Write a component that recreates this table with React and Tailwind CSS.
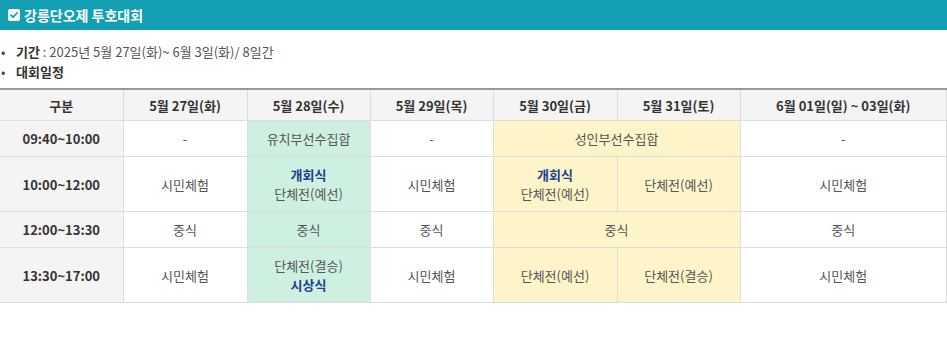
import React from 'react';

const font = { fontFamily: '"Noto Sans CJK KR", "Noto Sans", sans-serif' };

const GREEN = 'bg-[#cdf0e1]';
const YELLOW = 'bg-[#fdf5c9]';

const Blue = ({ children }) => <span className="block font-bold text-[#1d3f8f]">{children}</span>;

const Td = ({ children, className = '', ...rest }) => (
  <td className={`border border-[#dddddd] px-1 py-2 text-center align-middle leading-[19px] ${className}`} {...rest}>
    {children}
  </td>
);

const Th = ({ children }) => (
  <td className="border border-[#dddddd] border-l-0 bg-[#f4f4f4] px-1 py-2 text-center align-middle font-bold leading-[19px] text-[#333]">
    {children}
  </td>
);

const heads = ['구분', '5월 27일(화)', '5월 28일(수)', '5월 29일(목)', '5월 30일(금)', '5월 31일(토)', '6월 01일(일) ~ 03일(화)'];

export default function App() {
  return (
    <div className="w-[947px] bg-white text-[13px] text-[#555]" style={font}>
      <div className="flex h-[30px] items-center gap-1 bg-[#13a0b3] pl-2 text-[14px] font-bold text-white">
        <svg width="12" height="12" viewBox="0 0 12 12">
          <rect x="0" y="0" width="12" height="12" rx="2" fill="#fff" />
          <path d="M3 6.2 L5.1 8.2 L9 4" stroke="#13a0b3" strokeWidth="1.8" fill="none" strokeLinecap="round" strokeLinejoin="round" />
        </svg>
        <span>강릉단오제 투호대회</span>
      </div>

      <ul className="mb-[6px] pt-3">
        <li className="flex h-5 items-center text-[#555]">
          <span className="w-4 pl-[1px] text-[#444]">•</span>
          <span><b className="text-[#333]">기간</b> : 2025년 5월 27일(화)~ 6월 3일(화)/ 8일간</span>
        </li>
        <li className="flex h-5 items-center">
          <span className="w-4 pl-[1px] text-[#444]">•</span>
          <b className="text-[#333]">대회일정</b>
        </li>
      </ul>

      <table className="w-full table-fixed border-collapse border-t-2 border-t-[#999]">
        <colgroup>
          <col className="w-[123px]" />
          <col className="w-[124px]" />
          <col className="w-[123px]" />
          <col className="w-[123px]" />
          <col className="w-[124px]" />
          <col className="w-[123px]" />
          <col />
        </colgroup>
        <thead>
          <tr>
            {heads.map((h, i) => (
              <td
                key={h}
                className={`border border-[#dddddd] border-t-2 border-t-[#999] bg-[#f4f4f4] px-1 pt-[6px] pb-[5px] text-center font-bold leading-[19px] text-[#333] ${i === 0 ? 'border-l-0' : ''}`}
              >
                {h}
              </td>
            ))}
          </tr>
        </thead>
        <tbody>
          <tr>
            <Th>09:40~10:00</Th>
            <Td>-</Td>
            <Td className={GREEN}>유치부선수집합</Td>
            <Td>-</Td>
            <Td className={YELLOW} colSpan={2}>성인부선수집합</Td>
            <Td>-</Td>
          </tr>
          <tr>
            <Th>10:00~12:00</Th>
            <Td>시민체험</Td>
            <Td className={GREEN}>
              <Blue>개회식</Blue>
              단체전(예선)
            </Td>
            <Td>시민체험</Td>
            <Td className={YELLOW}>
              <Blue>개회식</Blue>
              단체전(예선)
            </Td>
            <Td className={YELLOW}>단체전(예선)</Td>
            <Td>시민체험</Td>
          </tr>
          <tr>
            <Th>12:00~13:30</Th>
            <Td>중식</Td>
            <Td className={GREEN}>중식</Td>
            <Td>중식</Td>
            <Td className={YELLOW} colSpan={2}>중식</Td>
            <Td>중식</Td>
          </tr>
          <tr>
            <Th>13:30~17:00</Th>
            <Td>시민체험</Td>
            <Td className={GREEN}>
              단체전(결승)
              <Blue>시상식</Blue>
            </Td>
            <Td>시민체험</Td>
            <Td className={YELLOW}>단체전(예선)</Td>
            <Td className={YELLOW}>단체전(결승)</Td>
            <Td>시민체험</Td>
          </tr>
        </tbody>
      </table>
    </div>
  );
}
